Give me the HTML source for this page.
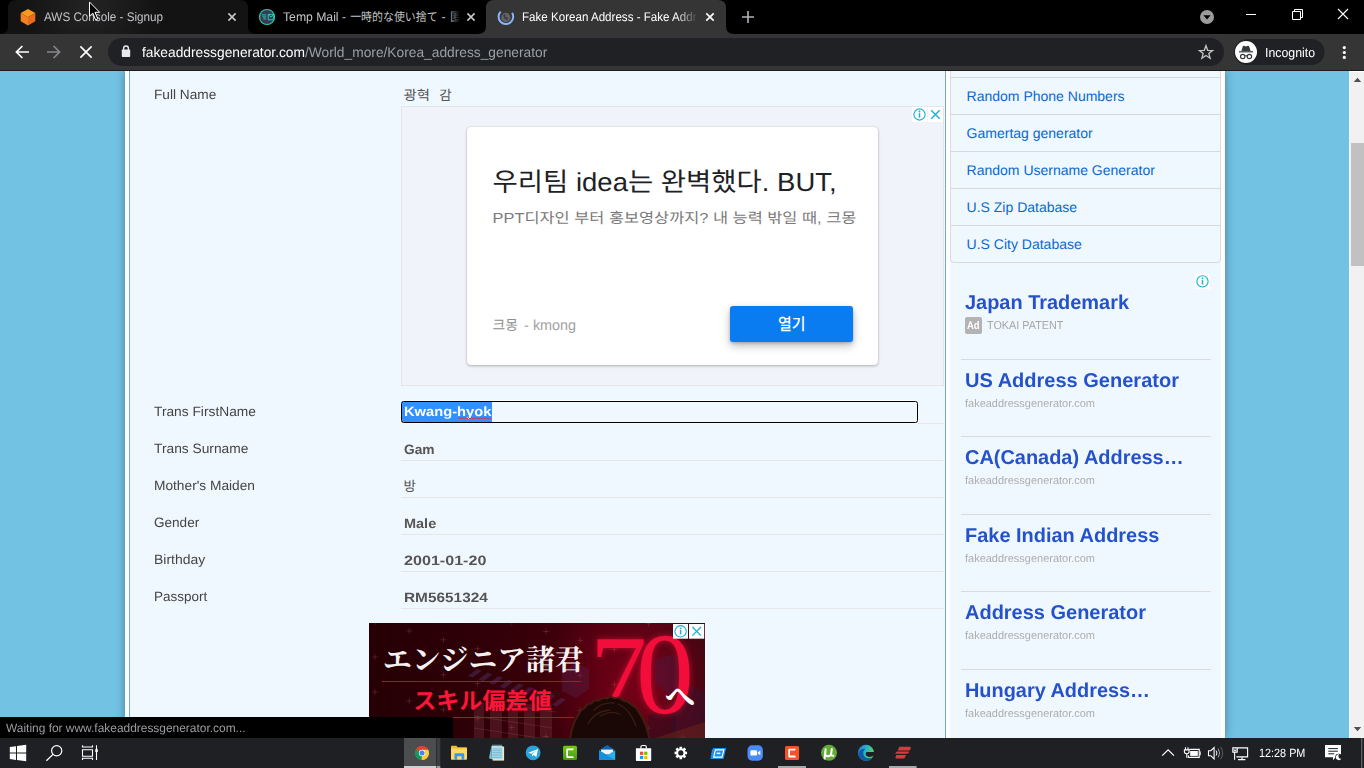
<!DOCTYPE html>
<html><head><meta charset="utf-8"><title>Fake Korean Address</title>
<style>

*{margin:0;padding:0;box-sizing:border-box}
html,body{text-rendering:geometricPrecision;width:1364px;height:768px;overflow:hidden;background:#72c2e4;font-family:"Liberation Sans",sans-serif}
.a{position:absolute;display:block}
.t{position:absolute;display:block;white-space:nowrap;line-height:1em;transform-origin:0 50%}
#tabstrip{left:0;top:0;width:1364px;height:34px;background:#000}
#toolbar{left:0;top:34px;width:1364px;height:36px;background:#353535}
#tbline{left:0;top:70px;width:1364px;height:1px;background:#1c1c1e}
#page{left:0;top:71px;width:1349px;height:667px;background:#72c2e4;overflow:hidden}
#wrap{left:125px;top:0;width:1100px;height:667px;background:#fff;box-shadow:0 0 9px rgba(0,0,0,.35)}
#lcol{left:4px;top:0;width:817px;height:667px;background:#f0f8ff;border-left:1px solid #6fa8e3;border-right:1px solid #6fa8e3}
#rcol{left:825px;top:0;width:271px;height:667px;background:#f0f8ff}
.hl{position:absolute;height:1px;background:#e4e6e8}
#sbar{left:1349px;top:71px;width:15px;height:667px;background:#f1f1f1}
#sthumb{left:2px;top:72px;width:13px;height:123px;background:#c1c1c1}
#status{left:0;top:717px;width:453px;height:21px;background:#000;border-top-right-radius:4px}
#taskbar{left:0;top:738px;width:1364px;height:30px;background:#1f2024}

</style></head>
<body>
<div id="page" class="a">
<div id="wrap" class="a">
<div id="lcol" class="a"></div>
<div id="rcol" class="a"></div>
</div>
</div>
<div class="a" style="left:0;top:71px;width:1349px;height:667px;overflow:hidden"><div class="a" style="left:0;top:-71px;width:1349px;height:768px">
<span class="t " style="left:153.9px;top:88.27px;font-size:13.5px;color:#444;transform:scaleX(1.0127);">Full Name</span>
<span class="t " style="left:153.9px;top:404.97px;font-size:13.5px;color:#444;transform:scaleX(1.0189);">Trans FirstName</span>
<span class="t " style="left:153.9px;top:441.97px;font-size:13.5px;color:#444;transform:scaleX(1.0201);">Trans Surname</span>
<span class="t " style="left:153.9px;top:478.97px;font-size:13.5px;color:#444;transform:scaleX(1.0164);">Mother's Maiden</span>
<span class="t " style="left:153.9px;top:515.97px;font-size:13.5px;color:#444;transform:scaleX(1.0038);">Gender</span>
<span class="t " style="left:153.9px;top:552.97px;font-size:13.5px;color:#444;transform:scaleX(1.0338);">Birthday</span>
<span class="t " style="left:153.9px;top:589.87px;font-size:13.5px;color:#444;transform:scaleX(0.9986);">Passport</span>
<div class="hl" style="left:401px;top:460px;width:543px"></div>
<div class="hl" style="left:401px;top:497px;width:543px"></div>
<div class="hl" style="left:401px;top:534px;width:543px"></div>
<div class="hl" style="left:401px;top:571px;width:543px"></div>
<div class="hl" style="left:401px;top:608px;width:543px"></div>
<svg class="a" style="left:401px;top:86px" width="32" height="18" viewBox="0 0 32 18"><text x="2.5" y="13.8" font-size="13.5" fill="#555" textLength="26.5" lengthAdjust="spacingAndGlyphs" style="font-family:'Liberation Sans','Noto Sans CJK KR',sans-serif">광혁</text></svg>
<svg class="a" style="left:437px;top:86px" width="19" height="18" viewBox="0 0 19 18"><text x="2.3" y="13.8" font-size="13.5" fill="#555" style="font-family:'Liberation Sans','Noto Sans CJK KR',sans-serif">감</text></svg>
<div class="hl" style="left:401px;top:423px;width:543px"></div>
<div class="a" style="left:402.4px;top:402.4px;width:89.8px;height:19.3px;background:#3390ff"></div>
<div class="a" style="left:401px;top:401px;width:517px;height:22px;border:1.6px solid #000;border-radius:2.5px;box-shadow:0 0 0 1px rgba(255,255,255,.7)"></div>
<span class="t " style="left:404.2px;top:405.37px;font-size:13.5px;color:#fff;font-weight:700;transform:scaleX(1.089);">Kwang-hyok</span>
<svg class="a" style="left:457px;top:416px" width="37" height="5" viewBox="0 0 37 5"><path fill="none" stroke="#e8283c" stroke-width="1" d="M1,3 l1.5,-1.5 l1.5,1.5 l1.5,-1.5 l1.5,1.5 l1.5,-1.5 l1.5,1.5 l1.5,-1.5 l1.5,1.5 l1.5,-1.5 l1.5,1.5 l1.5,-1.5 l1.5,1.5 l1.5,-1.5 l1.5,1.5 l1.5,-1.5 l1.5,1.5 l1.5,-1.5 l1.5,1.5 l1.5,-1.5 l1.5,1.5 l1.5,-1.5 l1.5,1.5"/></svg>
<span class="t " style="left:403.6px;top:442.57px;font-size:13.5px;color:#555;font-weight:700;transform:scaleX(1.0195);">Gam</span>
<svg class="a" style="left:402px;top:477px" width="19" height="19" viewBox="0 0 19 19"><text x="1.6" y="13.9" font-size="13.5" fill="#555" style="font-family:'Liberation Sans','Noto Sans CJK KR',sans-serif">방</text></svg>
<span class="t " style="left:403.6px;top:516.57px;font-size:13.5px;color:#555;font-weight:700;transform:scaleX(1.0729);">Male</span>
<span class="t " style="left:403.6px;top:553.57px;font-size:13.5px;color:#555;font-weight:700;transform:scaleX(1.1932);">2001-01-20</span>
<span class="t " style="left:403.6px;top:590.57px;font-size:13.5px;color:#555;font-weight:700;transform:scaleX(1.1393);">RM5651324</span>
<div class="a" style="left:401px;top:106px;width:543px;height:280px;background:#f0f3f9;border:1px solid #e3e5e9"></div>
<div class="a" style="left:467px;top:127px;width:411px;height:238px;background:#fff;border-radius:4px;box-shadow:0 1px 3px rgba(0,0,0,.28),0 0 1px rgba(0,0,0,.2)"></div>
<svg class="a" style="left:490px;top:164px" width="350" height="40" viewBox="0 0 350 40"><text x="2.6" y="27.4" font-size="26" fill="#202124" textLength="344" lengthAdjust="spacingAndGlyphs" style="font-family:'Liberation Sans','Noto Sans CJK KR',sans-serif">우리팀 idea는 완벽했다. BUT,</text></svg>
<svg class="a" style="left:490px;top:207px" width="370" height="23" viewBox="0 0 370 23"><text x="2.6" y="15.9" font-size="14.5" fill="#7a7a7a" textLength="363.7" lengthAdjust="spacingAndGlyphs" style="font-family:'Liberation Sans','Noto Sans CJK KR',sans-serif">PPT디자인 부터 홍보영상까지? 내 능력 밖일 때, 크몽</text></svg>
<svg class="a" style="left:490px;top:314px" width="32" height="23" viewBox="0 0 32 23"><text x="2.5" y="15.9" font-size="14" fill="#8e8e8e" textLength="25.5" lengthAdjust="spacingAndGlyphs" style="font-family:'Liberation Sans','Noto Sans CJK KR',sans-serif">크몽</text></svg>
<svg class="a" style="left:522px;top:314px" width="58" height="23" viewBox="0 0 58 23"><text x="2.1" y="15.9" font-size="14.5" fill="#a2a2a2" textLength="52" lengthAdjust="spacingAndGlyphs" style="font-family:'Liberation Sans',sans-serif">- kmong</text></svg>
<div class="a" style="left:730px;top:306px;width:123px;height:35.5px;background:#087cf0;border-radius:3px;box-shadow:0 4px 9px rgba(0,0,0,.26),0 1px 3px rgba(0,0,0,.2)"></div>
<svg class="a" style="left:776px;top:314px" width="33" height="21" viewBox="0 0 33 21"><text x="2" y="16" font-size="16.5" font-weight="500" fill="#fff" textLength="27.6" lengthAdjust="spacingAndGlyphs" style="font-family:'Liberation Sans','Noto Sans CJK KR',sans-serif">열기</text></svg>
<svg class="a" style="left:911px;top:107px" width="33" height="16" viewBox="911 107 33 16"><rect x="912" y="107" width="15" height="15" fill="#fff"/><rect x="928" y="107" width="15" height="15" fill="#fff"/><circle cx="919.5" cy="114.5" r="5.6" fill="none" stroke="#19afd0" stroke-width="1.1"/><rect x="918.75" y="113.2" width="1.5" height="4.4" fill="#19afd0"/><circle cx="919.5" cy="111.5" r="0.9" fill="#19afd0"/><path stroke="#19afd0" stroke-width="1.3" fill="none" d="M931.2,110.2 L939.7,118.8 M939.7,110.2 L931.2,118.8"/></svg>
<div class="a" style="left:950px;top:40px;width:271px;height:223px;border:1px solid #d9d9d9;border-radius:4px"></div>
<div class="a" style="left:951px;top:77px;width:269px;height:1px;background:#d9d9d9"></div>
<div class="a" style="left:951px;top:114px;width:269px;height:1px;background:#d9d9d9"></div>
<div class="a" style="left:951px;top:151px;width:269px;height:1px;background:#d9d9d9"></div>
<div class="a" style="left:951px;top:188px;width:269px;height:1px;background:#d9d9d9"></div>
<div class="a" style="left:951px;top:225px;width:269px;height:1px;background:#d9d9d9"></div>
<span class="t " style="left:966.6px;top:89.15px;font-size:14px;color:#0868cf;">Random Phone Numbers</span>
<span class="t " style="left:966.6px;top:126.15px;font-size:14px;color:#0868cf;">Gamertag generator</span>
<span class="t " style="left:966.6px;top:163.15px;font-size:14px;color:#0868cf;">Random Username Generator</span>
<span class="t " style="left:966.6px;top:200.15px;font-size:14px;color:#0868cf;">U.S Zip Database</span>
<span class="t " style="left:966.6px;top:237.15px;font-size:14px;color:#0868cf;">U.S City Database</span>
<svg class="a" style="left:1195px;top:274px" width="15" height="15" viewBox="1195 274 15 15"><rect x="1195" y="274" width="15" height="15" fill="#fff"/><circle cx="1202.5" cy="281.4" r="5.6" fill="none" stroke="#19afd0" stroke-width="1.1"/><rect x="1201.75" y="280.09999999999997" width="1.5" height="4.4" fill="#19afd0"/><circle cx="1202.5" cy="278.4" r="0.9" fill="#19afd0"/></svg>
<span class="t " style="left:965.2px;top:293.17px;font-size:20px;color:#2552cb;font-weight:700;transform:scaleX(0.9967);">Japan Trademark</span>
<div class="a" style="left:965px;top:317.2px;width:16.6px;height:16.8px;background:#b3b3b3;border-radius:2px"></div>
<span class="t " style="left:967px;top:321.19px;font-size:11px;color:#fff;font-weight:700;transform:scaleX(0.8593);">Ad</span>
<span class="t " style="left:986.6px;top:320.77px;font-size:11.5px;color:#a6a6a6;transform:scaleX(0.9414);">TOKAI PATENT</span>
<div class="a" style="left:961px;top:359px;width:250px;height:1px;background:#dbdbdb"></div>
<span class="t " style="left:965.2px;top:370.67px;font-size:20px;color:#2552cb;font-weight:700;transform:scaleX(1.001);">US Address Generator</span>
<span class="t " style="left:965.2px;top:398.59px;font-size:11px;color:#adadad;transform:scaleX(0.9981);">fakeaddressgenerator.com</span>
<div class="a" style="left:961px;top:436px;width:250px;height:1px;background:#dbdbdb"></div>
<span class="t " style="left:965.2px;top:448.17px;font-size:20px;color:#2552cb;font-weight:700;transform:scaleX(0.9968);">CA(Canada) Address…</span>
<span class="t " style="left:965.2px;top:476.09px;font-size:11px;color:#adadad;transform:scaleX(0.9981);">fakeaddressgenerator.com</span>
<div class="a" style="left:961px;top:514px;width:250px;height:1px;background:#dbdbdb"></div>
<span class="t " style="left:965.2px;top:525.67px;font-size:20px;color:#2552cb;font-weight:700;transform:scaleX(0.9975);">Fake Indian Address</span>
<span class="t " style="left:965.2px;top:553.59px;font-size:11px;color:#adadad;transform:scaleX(0.9981);">fakeaddressgenerator.com</span>
<div class="a" style="left:961px;top:591px;width:250px;height:1px;background:#dbdbdb"></div>
<span class="t " style="left:965.2px;top:603.17px;font-size:20px;color:#2552cb;font-weight:700;transform:scaleX(0.999);">Address Generator</span>
<span class="t " style="left:965.2px;top:631.09px;font-size:11px;color:#adadad;transform:scaleX(0.9981);">fakeaddressgenerator.com</span>
<div class="a" style="left:961px;top:669px;width:250px;height:1px;background:#dbdbdb"></div>
<span class="t " style="left:965.2px;top:680.67px;font-size:20px;color:#2552cb;font-weight:700;transform:scaleX(0.9948);">Hungary Address…</span>
<span class="t " style="left:965.2px;top:708.59px;font-size:11px;color:#adadad;transform:scaleX(0.9981);">fakeaddressgenerator.com</span>
<div class="a" style="left:369px;top:623px;width:336px;height:120px;overflow:hidden;background:linear-gradient(90deg,#250005 0%,#2e0007 30%,#3c000a 55%,#4e0010 70%,#4a0613 86%,#34070f 100%)"><div class="a" style="left:170px;top:-40px;width:210px;height:200px;background:radial-gradient(ellipse at 50% 50%,rgba(150,0,28,.6) 0%,rgba(120,0,25,.35) 40%,rgba(60,0,10,0) 70%)"></div><svg class="a" style="left:0;top:0" width="336" height="120" viewBox="369 623 336 120"><path stroke="rgba(255,140,170,.17)" stroke-width="1" fill="none" d="M372.0,622.0h6M375.0,619.0v6M372.0,657.0h6M375.0,654.0v6M372.0,692.0h6M375.0,689.0v6M372.0,727.0h6M375.0,724.0v6M406.2,630.9h6M409.2,627.9v6M406.2,665.9h6M409.2,662.9v6M406.2,700.9h6M409.2,697.9v6M406.2,735.9h6M409.2,732.9v6M440.4,639.8h6M443.4,636.8v6M440.4,674.8h6M443.4,671.8v6M440.4,709.8h6M443.4,706.8v6M474.6,648.7h6M477.6,645.7v6M474.6,683.7h6M477.6,680.7v6M474.6,718.7h6M477.6,715.7v6M508.8,622.6h6M511.8,619.6v6M508.8,657.6h6M511.8,654.6v6M508.8,692.6h6M511.8,689.6v6M508.8,727.6h6M511.8,724.6v6M543.0,631.5h6M546.0,628.5v6M543.0,666.5h6M546.0,663.5v6M543.0,701.5h6M546.0,698.5v6M543.0,736.5h6M546.0,733.5v6M577.2,640.4h6M580.2,637.4v6M577.2,675.4h6M580.2,672.4v6M577.2,710.4h6M580.2,707.4v6M611.4,649.3h6M614.4,646.3v6M611.4,684.3h6M614.4,681.3v6M611.4,719.3h6M614.4,716.3v6M645.6,623.2h6M648.6,620.2v6M645.6,658.2h6M648.6,655.2v6M645.6,693.2h6M648.6,690.2v6M645.6,728.2h6M648.6,725.2v6M679.8,632.1h6M682.8,629.1v6M679.8,667.1h6M682.8,664.1v6M679.8,702.1h6M682.8,699.1v6M679.8,737.1h6M682.8,734.1v6"/><path fill="rgba(84,56,110,.42)" d="M468.0,676.0 l9,-7 l5,1.6 l-9,7 ZM478.5,679.6 l9,-7 l5,1.6 l-9,7 ZM489.0,683.2 l9,-7 l5,1.6 l-9,7 ZM499.5,686.8 l9,-7 l5,1.6 l-9,7 ZM510.0,690.4 l9,-7 l5,1.6 l-9,7 ZM520.5,694.0 l9,-7 l5,1.6 l-9,7 ZM531.0,697.6 l9,-7 l5,1.6 l-9,7 ZM541.5,701.2 l9,-7 l5,1.6 l-9,7 ZM552.0,704.8 l9,-7 l5,1.6 l-9,7 Z"/><path fill="rgba(170,90,110,.20)" d="M474,706 l10,-4 v41 h-10 Z M490,702 h12 v41 h-12 Z M508,700 h10 v43 h-10 Z M524,704 h11 v39 h-11 Z M540,700 l12,5 v38 h-12 Z"/><path stroke="rgba(200,120,140,.18)" stroke-width="1" fill="none" d="M474,716 L552,728 M474,728 L552,740 M486,702 L556,712"/><path fill="rgba(86,40,84,.34)" d="M562,672 l14,-9 l13,6 v20 l-13,9 l-14,-7 Z"/><path fill="rgba(66,30,72,.36)" d="M655,660 l18,-6 l14,10 v22 l-16,8 l-16,-10 Z"/><path fill="rgba(52,22,52,.42)" d="M672,700 l18,-14 l15,6 v51 h-33 Z"/><path fill="rgba(36,14,36,.4)" d="M648,716 l16,-10 l12,8 v29 h-28 Z"/><path fill="rgba(150,60,20,.28)" d="M640,743 L705,722 V743 Z"/></svg></div>
<svg class="a" style="left:381px;top:637px;overflow:visible" width="206" height="40" viewBox="0 0 206 40"><text x="2" y="32.5" font-size="29" font-weight="700" fill="#f6f1f1" textLength="200.5" lengthAdjust="spacingAndGlyphs" style="font-family:'Liberation Serif','Noto Serif CJK JP','Noto Serif CJK SC',serif">エンジニア諸君</text></svg>
<div class="a" style="left:382px;top:681px;width:198.5px;height:1.2px;background:#c40c2a"></div>
<svg class="a" style="left:411px;top:686px;overflow:visible" width="144" height="29" viewBox="0 0 144 29"><text x="2.2" y="22.8" font-size="23" font-weight="700" fill="#ff1538" textLength="138.5" lengthAdjust="spacingAndGlyphs" style="font-family:'Liberation Sans','Noto Sans CJK JP',sans-serif">スキル偏差値</text></svg>
<div class="a" style="left:453px;top:717.3px;width:121px;height:1.2px;background:#c40c2a"></div>
<svg class="a" style="left:586px;top:630px;overflow:visible" width="60" height="90" viewBox="586 630 60 90"><text x="590" y="714" font-size="114" fill="#f20d3a" style="font-family:'Liberation Serif',serif;filter:drop-shadow(0 0 3px rgba(255,20,60,.55))">7</text></svg>
<svg class="a" style="left:636px;top:633px;overflow:visible" width="53" height="85" viewBox="0 0 53 85"><text x="0" y="80" font-size="116" fill="#f20d3a" style="font-family:'Liberation Serif',serif;filter:drop-shadow(0 0 3px rgba(255,20,60,.55))">0</text></svg>
<svg class="a" style="left:560px;top:690px" width="100" height="53" viewBox="560 690 100 53"><path fill="#40200f" fill-opacity=".85" d="M568.6,743 C569.6,731 573,720 578.4,712.6 L580,709 L583.6,707.4 L586,703.6 L590.4,702.6 L594,699.6 L598.6,699.4 L603,697 L607.4,697.4 L611,695.2 L614,697 L619,696.8 L623,699.2 L628,700.4 L632.6,704 L637,707 L640.6,712.4 C646,720 649.6,731 651,743 Z"/><path fill="#190806" d="M570.8,743 C571.8,731.6 575,721.4 580,714.2 L582,710.6 L585.4,709 L587.6,705.6 L591.4,704.6 L595,701.6 L599,701.4 L603.4,699 L607.4,699.4 L611,697.4 L614,699 L618.6,698.8 L622.4,701.2 L627,702.4 L631.4,705.8 L635.4,708.8 L638.8,714 C644,721.6 647.6,731.6 648.8,743 Z"/><path fill="none" stroke="#3c1c12" stroke-width="1.3" stroke-linecap="round" d="M594,710 q8,-8 20,-7 M588,724 q7,-13 22,-14 M618,704 q12,5 18,22 M600,716 q10,-6 20,-2"/></svg>
<svg class="a" style="left:664px;top:684px;overflow:visible" width="33" height="25" viewBox="0 0 33 25"><text x="1" y="23" font-size="30" font-weight="700" fill="#fff" style="font-family:'Liberation Serif','Noto Serif CJK JP','Noto Serif CJK SC',serif">へ</text></svg>
<svg class="a" style="left:673px;top:623px" width="32" height="16" viewBox="673 623 32 16"><rect x="673" y="624" width="15" height="14.7" fill="#fff"/><rect x="689" y="624" width="15.2" height="14.7" fill="#fff"/><circle cx="680.6" cy="631.3" r="5.7" fill="none" stroke="#19afd0" stroke-width="1.1"/><rect x="679.85" y="630.0" width="1.5" height="4.4" fill="#19afd0"/><circle cx="680.6" cy="628.3" r="0.9" fill="#19afd0"/><path stroke="#19afd0" stroke-width="1.3" fill="none" d="M692.4,627 L700.9,635.6 M700.9,627 L692.4,635.6"/></svg>
</div></div>
<div id="sbar" class="a"><div id="sthumb" class="a"></div><svg class="a" style="left:0;top:0" width="15" height="667" viewBox="1349 71 15 667"><rect x="1349" y="71" width="15" height="1" fill="#fff"/><rect x="1349" y="71" width="1" height="667" fill="#f8f8f8"/><path fill="#505050" d="M1357.5,77.8 L1361.2,82 H1353.8 Z M1357.5,731.2 L1361.2,727 H1353.8 Z"/></svg></div>
<div id="tabstrip" class="a"></div>
<div id="toolbar" class="a"></div>
<div id="tbline" class="a"></div>
<svg class="a" style="left:0;top:0" width="1364" height="71" viewBox="0 0 1364 71"><path fill="#131313" d="M0,34 Q8,34 8,26 L8,8 Q8,0 16,0 L240,0 Q248,0 248,8 L248,26 Q248,34 256,34 Z"/><defs><radialGradient id="gH" gradientUnits="userSpaceOnUse" cx="90" cy="6" r="70"><stop offset="0" stop-color="#fff" stop-opacity=".07"/><stop offset="1" stop-color="#fff" stop-opacity="0"/></radialGradient></defs><path fill="url(#gH)" d="M8,34 L8,8 Q8,0 16,0 L240,0 Q248,0 248,8 L248,34 Z"/><path fill="#353535" d="M478,34 Q486,34 486,26 L486,8 Q486,0 494,0 L718,0 Q726,0 726,8 L726,26 Q726,34 734,34 Z"/><path fill="#f8991d" d="M28,9 L35.3,13 L28,17.2 L20.7,13 Z"/><path fill="#f58220" d="M20.7,13 L28,17.2 L28,25.4 L20.7,21.2 Z"/><path fill="#ea6b1e" d="M35.3,13 L28,17.2 L28,25.4 L35.3,21.2 Z"/><path stroke="#c4c7c5" stroke-width="1.6" fill="none" d="M228.4,13.4 L235.6,20.6 M235.6,13.4 L228.4,20.6"/><circle cx="267" cy="17" r="7.5" fill="#3c355c" stroke="#1fd3a4" stroke-width="1.2"/><path fill="none" stroke="#1fd3a4" stroke-width="1" d="M268.2,14.4 h5.6 v5.4 h-5.6 Z M268.2,14.6 l2.8,2.5 l2.8,-2.5 M261.8,14.9 h4.4 M262.4,16.9 h3.8 M263.4,18.9 h2.8"/><path stroke="#c4c7c5" stroke-width="1.6" fill="none" d="M467.4,13.4 L474.6,20.6 M474.6,13.4 L467.4,20.6"/><circle cx="505.8" cy="17.5" r="4.7" fill="#5f6267"/><path fill="#3c3d40" d="M503,15.6 q1.2,-1.6 2.6,-1.2 q0.6,0.9 -0.7,1.3 q-0.4,0.9 1,1.2 q1.7,0.2 2.2,1.5 q0.2,1.4 -1.2,1.6 q-0.6,-0.9 -1.9,-0.9 q-1.2,-0.6 -0.8,-1.8 q-0.8,-0.8 -1.2,-1.7 Z"/><path fill="none" stroke="#8ab4f8" stroke-width="2" stroke-linecap="butt" d="M500.7,11.6 A7.3,7.3 0 1 0 512.1,12.9"/><path stroke="#ffffff" stroke-width="1.7" fill="none" d="M706.3,13.3 L713.7,20.7 M713.7,13.3 L706.3,20.7"/><path stroke="#b0b3b8" stroke-width="1.6" fill="none" d="M742,17 H754 M748,11 V23"/><circle cx="1207" cy="17" r="7" fill="#9b9b9b"/><path fill="#000" d="M1203.4,15.2 h7.2 l-3.6,4.2 Z"/><path stroke="#fff" stroke-width="1" fill="none" d="M1246,14.5 H1256"/><path stroke="#fff" stroke-width="1" fill="none" d="M1292.5,11.5 h8 v8 h-8 Z M1294.5,11.5 v-2 h8 v8 h-2"/><path stroke="#fff" stroke-width="1.1" fill="none" d="M1338,9 L1348,19 M1348,9 L1338,19"/><path stroke="#fff" stroke-width="1.7" fill="none" d="M29,52 H16.6 M22.4,46 L16.4,52 L22.4,58"/><path stroke="#85878a" stroke-width="1.7" fill="none" d="M47,52 H59.4 M53.6,46 L59.6,52 L53.6,58"/><path stroke="#ffffff" stroke-width="1.7" fill="none" d="M80.4,46.4 L91.6,57.6 M91.6,46.4 L80.4,57.6"/><rect x="108" y="38" width="1116" height="28" rx="14" fill="#202124"/><rect x="121.8" y="49.5" width="8.4" height="7.5" rx="0.8" fill="#e8eaed"/><path fill="none" stroke="#e8eaed" stroke-width="1.4" d="M123.6,50 v-1.6 a2.4,2.4 0 0 1 4.8,0 v1.6"/><path fill="none" stroke="#c4c7c5" stroke-width="1.3" stroke-linejoin="miter" d="M1206.0,45.7 L1207.7,50.3 L1212.6,50.5 L1208.8,53.5 L1210.1,58.2 L1206.0,55.5 L1201.9,58.2 L1203.2,53.5 L1199.4,50.5 L1204.3,50.3 Z"/><rect x="1234" y="39" width="90.5" height="26" rx="13" fill="#202124"/><circle cx="1246" cy="52" r="11" fill="#fff"/><path fill="#35383b" d="M1241.4,50.9 l1.5,-4.6 q0.3,-0.9 1.2,-0.6 l1.9,0.7 l1.9,-0.7 q0.9,-0.3 1.2,0.6 l1.5,4.6 Z"/><rect x="1239" y="51.2" width="14" height="1.2" fill="#35383b"/><circle cx="1242.7" cy="56.5" r="2.2" fill="none" stroke="#35383b" stroke-width="1.2"/><circle cx="1249.4" cy="56.5" r="2.2" fill="none" stroke="#35383b" stroke-width="1.2"/><path stroke="#35383b" stroke-width="1" fill="none" d="M1244.9,56 q1.1,-0.7 2.3,0"/><circle cx="1344.3" cy="47.6" r="1.6" fill="#fff"/><circle cx="1344.3" cy="52.5" r="1.6" fill="#fff"/><circle cx="1344.3" cy="57.4" r="1.6" fill="#fff"/></svg>
<span class="t " style="left:44px;top:10.62px;font-size:12.5px;color:#c2c4c7;transform:scaleX(0.9342);">AWS Console - Signup</span>
<span class="t " style="left:283.3px;top:10.62px;font-size:12.5px;color:#c2c4c7;transform:scaleX(0.9753);">Temp Mail -</span>
<svg class="a" style="left:348px;top:9px" width="93" height="17" viewBox="0 0 93 17"><text x="2.2" y="12.4" font-size="12" fill="#c2c4c7" textLength="87.4" lengthAdjust="spacingAndGlyphs" style="font-family:'Liberation Sans','Noto Sans CJK JP',sans-serif">一時的な使い捨て</text></svg>
<span class="t " style="left:441.6px;top:10.62px;font-size:12.5px;color:#c2c4c7;">-</span>
<svg class="a" style="left:448px;top:9px" width="17" height="17" viewBox="0 0 17 17"><text x="2" y="12.4" font-size="12" fill="#c2c4c7" style="font-family:'Liberation Sans','Noto Sans CJK JP',sans-serif">匿</text></svg>
<div class="a" style="left:449px;top:6px;width:11px;height:22px;background:linear-gradient(90deg,rgba(0,0,0,0),#000)"></div><div class="a" style="left:460px;top:6px;width:4px;height:22px;background:#000"></div>
<span class="t " style="left:521.6px;top:10.62px;font-size:12.5px;color:#fff;transform:scaleX(0.9272);">Fake Korean Address - Fake Addr</span>
<div class="a" style="left:676px;top:6px;width:22px;height:22px;background:linear-gradient(90deg,rgba(53,53,53,0),#353535)"></div>
<span class="t " style="left:142.2px;top:44.95px;font-size:14px;color:#fff;transform:scaleX(0.9833);">fakeaddressgenerator.com</span>
<span class="t " style="left:305.2px;top:44.95px;font-size:14px;color:#9aa0a6;transform:scaleX(0.9832);">/World_more/Korea_address_generator</span>
<span class="t " style="left:1265px;top:45.60px;font-size:13px;color:#fff;transform:scaleX(0.9476);">Incognito</span>
<svg class="a" style="left:86px;top:0" width="18" height="24" viewBox="0 0 18 24"><path fill="#000" stroke="#fff" stroke-width="1" stroke-linejoin="miter" d="M3.5,2 L3.5,16.2 L6.8,13.1 L9.6,19.8 L11.8,18.9 L9,12.3 L13.6,12.3 Z"/></svg>
<div id="status" class="a"></div>
<div id="taskbar" class="a"></div>
<span class="t " style="left:5.5px;top:721.84px;font-size:12px;color:#9a9da1;transform:scaleX(0.9938);">Waiting for www.fakeaddressgenerator.com...</span>
<svg class="a" style="left:0;top:738px" width="1364" height="30" viewBox="0 738 1364 30"><rect x="404" y="738" width="32.3" height="30" fill="#4c4d4f"/><rect x="437" y="738" width="3.3" height="30" fill="#3d3e40"/><rect x="404" y="766" width="32.3" height="2" fill="#d0d0d0"/><rect x="437" y="766" width="3.3" height="2" fill="#9c9c9c"/><rect x="778" y="766" width="28" height="2" fill="#a8a8a8"/><rect x="889" y="766" width="27.6" height="2" fill="#a8a8a8"/><path fill="#fff" d="M9.8,747.1 L16,746.2 V752.6 H9.8 Z M17,746.1 L26.2,744.7 V752.6 H17 Z M9.8,753.6 H16 V760 L9.8,759.1 Z M17,753.6 H26.2 V761.3 L17,760.1 Z"/><circle cx="56.7" cy="750.7" r="5.1" fill="none" stroke="#fff" stroke-width="1.2"/><path stroke="#fff" stroke-width="1.3" d="M53,754.4 L46.4,760.8"/><path fill="none" stroke="#fff" stroke-width="1.1" d="M82.5,749.8 h10 v6.4 h-10 Z M82.5,745.3 v1.7 h10 v-1.7 M82.5,759.9 v-1.7 h10 v1.7 M96.5,745.3 V759.9"/><rect x="95.3" y="749.2" width="2.5" height="2.8" fill="#fff"/><circle cx="422" cy="753" r="7" fill="#db4437"/><path fill="#0f9d58" d="M422,753 L415.9,749.5 A7,7 0 0 0 421.7,760 Z"/><path fill="#ffcd40" d="M422,753 L421.7,760 A7,7 0 0 0 428.1,749.6 L422,749.6 Z"/><path fill="#db4437" d="M415.9,749.5 A7,7 0 0 1 428.1,749.6 L422,749.6 L422,753 Z"/><circle cx="422" cy="753" r="3.2" fill="#f1f1f1"/><circle cx="422" cy="753" r="2.5" fill="#4285f4"/><path fill="#f5b82e" d="M451,746.6 q0,-0.8 0.8,-0.8 h4.6 l1.3,1.5 h8.5 q0.8,0 0.8,0.8 v2 H451 Z"/><path fill="#ffd965" d="M451,748.6 h16 v10.4 q0,0.8 -0.8,0.8 h-14.4 q-0.8,0 -0.8,-0.8 Z"/><path fill="#3b97e3" d="M454.5,760 v-5.8 q0,-0.9 0.9,-0.9 h7.9 q0.9,0 0.9,0.9 v5.8 h-2.6 v-3.8 h-4.5 v3.8 Z"/><path fill="#f3e6c4" d="M492.6,746.6 h11.5 v14 h-11.5 Z"/><path fill="#a9dcec" d="M491.4,746 h11.2 v13.2 h-11.2 Z"/><path fill="#7fc3d8" d="M491.4,746 L489,758.3 L491.4,759.2 Z"/><path stroke="#6fb1c7" stroke-width="0.7" d="M492.4,749 h9.4 M492.4,750.7 h9.4 M492.4,752.4 h9.4 M492.4,754.1 h9.4 M492.4,755.8 h9.4 M492.4,757.5 h9.4"/><path stroke="#d6eef5" stroke-width="0.9" d="M493,744.7 v2 M495,744.7 v2 M497,744.7 v2 M499,744.7 v2 M501,744.7 v2"/><circle cx="533.1" cy="752.8" r="7.4" fill="#2aa3dd"/><path fill="#fff" d="M528.3,752.8 L538,748.9 L536.4,757 L533.6,755 L532.2,756.4 L532,754.2 L536.2,750.4 L531.2,753.7 Z"/><defs><linearGradient id="gC" x1="0" y1="0" x2="0" y2="1"><stop offset="0" stop-color="#73c71d"/><stop offset="1" stop-color="#489a10"/></linearGradient></defs><rect x="563" y="745.7" width="14" height="14.3" rx="1.6" fill="url(#gC)"/><path fill="#fff" d="M574,748.5 H567.3 q-1,0 -1,1 V757 q0,1 1,1 H574 L573,756.2 H568 V750.3 H573 Z"/><path fill="#0f65b5" d="M599,750.2 L607.1,744.9 L615.2,750.2 Z"/><path fill="#f4f4f4" d="M601,749.6 h12.2 v5 h-12.2 Z"/><path fill="#2ab0f0" d="M599,750.2 L607.1,755.3 L615.2,750.2 V760 H599 Z"/><path fill="#1690dc" d="M599,750.2 L615.2,760 H599 Z"/><path fill="none" stroke="#fff" stroke-width="1.2" d="M640.9,748.6 v-1.6 q0,-1.5 1.5,-1.5 h2.4 q1.5,0 1.5,1.5 v1.6"/><path fill="#fff" d="M635.9,748.2 h15.3 v12 q0,0.8 -0.8,0.8 h-13.7 q-0.8,0 -0.8,-0.8 Z"/><rect x="640" y="751.7" width="3.2" height="3.2" fill="#f25022"/><rect x="644.2" y="751.7" width="3.2" height="3.2" fill="#7fba00"/><rect x="640" y="755.9" width="3.2" height="3.2" fill="#00a4ef"/><rect x="644.2" y="755.9" width="3.2" height="3.2" fill="#ffb900"/><path fill="#fff" fill-rule="evenodd" d="M687.07,751.63 L687.07,754.17 L685.29,754.29 L684.96,755.09 L686.13,756.44 L684.34,758.23 L682.99,757.06 L682.19,757.39 L682.07,759.17 L679.53,759.17 L679.41,757.39 L678.61,757.06 L677.26,758.23 L675.47,756.44 L676.64,755.09 L676.31,754.29 L674.53,754.17 L674.53,751.63 L676.31,751.51 L676.64,750.71 L675.47,749.36 L677.26,747.57 L678.61,748.74 L679.41,748.41 L679.53,746.63 L682.07,746.63 L682.19,748.41 L682.99,748.74 L684.34,747.57 L686.13,749.36 L684.96,750.71 L685.29,751.51 Z M678.20,752.90 a2.6,2.6 0 1 0 5.2,0 a2.6,2.6 0 1 0 -5.2,0 Z"/><path fill="#1f8fe5" d="M713.4,748 H726.2 L723.6,759 H710.2 L711.2,757 L710.4,756.2 L711.6,754.4 L710.9,753.6 L712,751.8 L711.4,751 Z"/><path fill="none" stroke="#fff" stroke-width="1.1" d="M715.4,749.9 H723.8 L722,757.1 H713.6 Z"/><rect x="716.6" y="752.6" width="3.8" height="1.5" fill="#fff"/><rect x="747.5" y="745.3" width="15.4" height="15.4" rx="4.6" fill="#4a8cf7"/><rect x="750.4" y="750.2" width="6.6" height="5.4" rx="1.2" fill="#fff"/><path fill="#fff" d="M757.6,752.4 L760.3,750.5 V755.3 L757.6,753.4 Z"/><rect x="785" y="746" width="14.1" height="14" rx="1.6" fill="#f4512e"/><path fill="#fff" d="M796,748.8 H789.3 q-1,0 -1,1 V756.4 q0,1 1,1 H796 L795,755.6 H790 V750.6 H795 Z"/><circle cx="829" cy="752.8" r="8" fill="#63ab37"/><path fill="none" stroke="#fff" stroke-width="2" stroke-linecap="round" d="M825.6,749.2 L824.6,758.6 M825.6,749.2 L825.2,753.6 q0,2.6 2.8,2.6 q2.8,0 3.2,-2.8 L831.8,749 M831.2,753.4 q-0.2,2.8 2.2,2.4"/><defs><linearGradient id="gE" x1="0" y1="0" x2="1" y2="0.4"><stop offset="0" stop-color="#1b7fd6"/><stop offset="0.55" stop-color="#2bb3c7"/><stop offset="1" stop-color="#63d34c"/></linearGradient></defs><circle cx="866" cy="752.8" r="8" fill="url(#gE)"/><path fill="#0f5aa8" d="M858.2,754 q1.4,-5.6 7.4,-5.2 q-3,1.8 -2.2,5.4 q1,3.8 5.6,4 q2.4,0 4,-1.2 q-2.4,3.9 -7,3.9 q-6.4,-0.5 -7.8,-6.9 Z"/><path fill="#1f2024" d="M866.4,751.9 q-1.5,2 -0.1,3.9 q2,1.9 5.6,0.7 q1.4,-0.5 2.6,-1.6 L874.6,751.9 Z"/><path fill="#da3940" d="M899.4,746.8 H909.6 q1.6,0.2 1.2,1.9 q-0.5,1.7 -2.2,1.9 H897.6 Z M896.8,751.4 H909.4 q-0.6,2.2 -3,2.4 H895 L896,752.6 Z M896.4,754.9 H906 L905,757.6 q-0.5,1 -1.6,1 H896.4 q-1.2,-0.2 -0.9,-1.5 Z"/><path fill="none" stroke="#fff" stroke-width="1.2" d="M1162.2,755.7 L1168.1,749.8 L1174,755.7"/><path fill="none" stroke="#fff" stroke-width="1.1" d="M1185.5,747.3 v2.4 M1188,747.3 v2.4 M1184.4,749.9 h4.7 v2.2 q0,1.6 -2.35,1.6 q-2.35,0 -2.35,-1.6 Z M1186.75,753.7 v4.1 M1189.6,749.4 H1199.2 V757.4 H1188.4 V755.2"/><rect x="1190.2" y="751" width="7.6" height="4.9" fill="#fff"/><rect x="1199.7" y="751.4" width="1" height="3.9" fill="#fff"/><path fill="none" stroke="#fff" stroke-width="1.1" d="M1208.5,750.7 h2.3 l3.3,-3.2 v11.4 l-3.3,-3.2 h-2.3 Z"/><path fill="none" stroke="#fff" stroke-width="1" d="M1216.1,750.6 q1.7,2.4 0,5"/><path fill="none" stroke="#a0a0a0" stroke-width="1" d="M1218.2,748.6 q3,4.4 0,8.8"/><path fill="none" stroke="#5e5f63" stroke-width="1" d="M1220.6,746.8 q4,6.2 0,12.4"/><path fill="none" stroke="#fff" stroke-width="1.1" d="M1237.2,747.9 H1247.6 V756.9 H1236.4 M1242,757 v2.3 M1238,759.6 h7.4 M1232.8,747.9 h4.4 v4.2 h-4.4 Z M1234.6,752.2 V759.8"/><path stroke="#fff" stroke-width="0.9" fill="none" d="M1234,749.2 v1.4 h2 v-1.4"/><path fill="#fff" d="M1325,745 H1341 V757.3 H1335.6 L1333,760.2 V757.3 H1325 Z"/><path stroke="#1f2024" stroke-width="1" d="M1328.3,748.6 h9.6 M1328.3,751.2 h9.6 M1328.3,753.8 h6"/><circle cx="1338.6" cy="757" r="3.3" fill="#1f2024"/><path fill="#fff" d="M1339.4,754.2 a3,3 0 1 0 2,4.6 a2.6,2.6 0 0 1 -2,-4.6 Z"/><rect x="1361.4" y="738" width="0.8" height="30" fill="#8b8b8b"/></svg>
<span class="t " style="left:1259.2px;top:746.84px;font-size:12px;color:#fff;transform:scaleX(0.9033);">12:28 PM</span>
</body></html>
